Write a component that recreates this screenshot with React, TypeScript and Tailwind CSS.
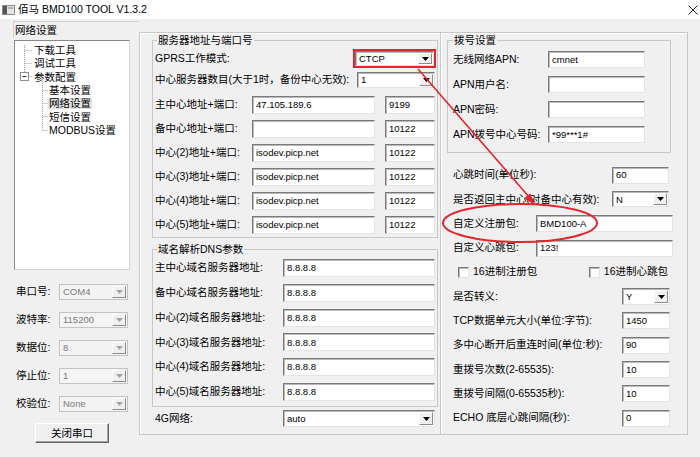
import React from "react";

const edge3d =
  "border border-t-[#7a7a7a] border-l-[#7a7a7a] border-r-[#e4e4e4] border-b-[#e4e4e4] shadow-[inset_1px_1px_0_#b9b9b9]";

function Edit({ value = "", className = "" }: { value?: string; className?: string }) {
  return (
    <div
      className={`flex items-center overflow-hidden whitespace-nowrap bg-white pl-[3px] text-[9.5px] leading-none ${edge3d} ${className}`}
    >
      {value}
    </div>
  );
}

function Arrow({ disabled = false }: { disabled?: boolean }) {
  return (
    <svg width="7" height="4" viewBox="0 0 7 4">
      <path d="M0 0h7L3.5 4z" fill={disabled ? "#a3a3a3" : "#000"} />
    </svg>
  );
}

function Combo({
  value,
  className = "",
  disabled = false,
}: {
  value: string;
  className?: string;
  disabled?: boolean;
}) {
  return (
    <div
      className={`flex overflow-hidden ${
        disabled
          ? "border border-[#c4c4c4] bg-[#f4f4f4] text-[#7a7a7a]"
          : `bg-white text-black ${edge3d}`
      } ${className}`}
    >
      <div className="flex flex-1 items-center pl-[3px] text-[9.5px] leading-none">{value}</div>
      <div className="m-[1px] flex w-[14px] items-center justify-center border border-t-white border-l-white border-r-[#8c8c8c] border-b-[#8c8c8c] bg-[#f0f0f0]">
        <Arrow disabled={disabled} />
      </div>
    </div>
  );
}

function Check() {
  return <div className={`h-[11px] w-[11px] bg-white ${edge3d}`} />;
}

const tree = [
  { text: "下载工具", child: false },
  { text: "调试工具", child: false },
  { text: "参数配置", child: false },
  { text: "基本设置", child: true },
  { text: "网络设置", child: true, sel: true },
  { text: "短信设置", child: true },
  { text: "MODBUS设置", child: true },
];

const serial = [
  ["串口号:", "COM4"],
  ["波特率:", "115200"],
  ["数据位:", "8"],
  ["停止位:", "1"],
  ["校验位:", "None"],
];

const centers = [
  ["主中心地址+端口:", "47.105.189.6", "9199"],
  ["备中心地址+端口:", "", "10122"],
  ["中心(2)地址+端口:", "isodev.picp.net", "10122"],
  ["中心(3)地址+端口:", "isodev.picp.net", "10122"],
  ["中心(4)地址+端口:", "isodev.picp.net", "10122"],
  ["中心(5)地址+端口:", "isodev.picp.net", "10122"],
];

const dns = [
  "主中心域名服务器地址:",
  "备中心域名服务器地址:",
  "中心(2)域名服务器地址:",
  "中心(3)域名服务器地址:",
  "中心(4)域名服务器地址:",
  "中心(5)域名服务器地址:",
];

const apn = [
  ["无线网络APN:", "cmnet"],
  ["APN用户名:", ""],
  ["APN密码:", ""],
  ["APN拨号中心号码:", "*99***1#"],
];

const numbers = [
  ["TCP数据单元大小(单位:字节):", "1450"],
  ["多中心断开后重连时间(单位:秒):", "90"],
  ["重拨号次数(2-65535):", "10"],
  ["重拨号间隔(0-65535秒):", "10"],
  ["ECHO 底层心跳间隔(秒):", "0"],
];

function TitleBar() {
  return (
    <div className="flex h-[19px] items-center bg-white">
      <svg className="ml-[2px]" width="13" height="10" viewBox="0 0 13 10">
        <rect x="0.5" y="0.5" width="12" height="9" fill="#e6e6e6" stroke="#8a8a8a" />
        <rect x="1" y="1" width="4" height="8" fill="#555" />
        <rect x="6" y="2" width="5" height="2" fill="#9fb7c9" />
      </svg>
      <span className="ml-[3px] text-[10.5px] leading-none">佰马 BMD100 TOOL V1.3.2</span>
      <svg className="ml-auto mr-[2px]" width="10" height="10" viewBox="0 0 10 10">
        <path d="M0.5 0.5L9.5 9.5M9.5 0.5L0.5 9.5" stroke="#222" strokeWidth="1" />
      </svg>
    </div>
  );
}

function LeftColumn() {
  return (
    <div className="w-[139px] shrink-0">
      <div className="ml-[13px] mt-[2px] flex h-[17px] items-center border-l border-t border-[#d0d0d0] pl-[1px] leading-none">
        网络设置
      </div>
      <div className="relative ml-[14px] mt-[2px] h-[230px] w-[116px] border border-t-[#8a8a8a] border-l-[#8a8a8a] border-r-[#d6d6d6] border-b-[#d6d6d6] bg-white pt-[2.5px]">
        <svg className="absolute left-0 top-0" width="114" height="100" viewBox="0 0 114 100">
          <g stroke="#a0a0a0" strokeWidth="1" strokeDasharray="1 1" fill="none">
            <path d="M9.5 4V31.5M9.5 9.5H17M9.5 22.5H17M13.5 35.5H17" />
            <path d="M27.5 40V89.5M27.5 49.5H33M27.5 62.5H33M27.5 75.5H33M27.5 89.5H33" />
          </g>
          <rect x="5.5" y="31.5" width="8" height="8" fill="#fff" stroke="#8f8f8f" />
          <path d="M7.5 35.5H11.5" stroke="#333" />
        </svg>
        {tree.map((t) => (
          <div
            key={t.text}
            className={`flex h-[13.33px] items-center leading-none ${t.child ? "pl-[34px]" : "pl-[19px]"}`}
          >
            <span className={t.sel ? "-ml-[1px] bg-[#e4e4e4] px-[1px]" : ""}>{t.text}</span>
          </div>
        ))}
      </div>
      <div className="mt-[8px]">
        {serial.map(([label, value]) => (
          <div key={label} className="flex h-[28px] items-center pl-[16px]">
            <span className="w-[43px]">{label}</span>
            <Combo value={value} disabled className="h-[16px] w-[69px]" />
          </div>
        ))}
      </div>
      <div className="ml-[35px] mt-[5px] flex h-[20px] w-[74px] items-center justify-center border border-t-white border-l-white border-r-[#646464] border-b-[#646464] bg-[#f0f0f0] shadow-[inset_-1px_-1px_0_#a0a0a0] leading-none">
        关闭串口
      </div>
    </div>
  );
}

function MiddleFrame() {
  return (
    <div className="mt-[13px] h-[403px] w-[301px] shrink-0 border border-r-0 border-[#c8c8c8] shadow-[inset_1px_1px_0_#fff]">
      <fieldset className="ml-[12px] mt-[1px] w-[286px] border border-[#c8c8c8] px-[2px] pb-[3px]">
        <legend className="ml-[2px] px-[1px] leading-[13px]">服务器地址与端口号</legend>
        <div className="mt-[2px] flex h-[19px] items-center">
          <span>GPRS工作模式:</span>
          <div className="-mr-[1px] ml-auto h-[19px] w-[83px] border-2 border-[#e3262c]">
            <Combo value="CTCP" className="h-full w-full" />
          </div>
        </div>
        <div className="mt-[3px] flex h-[17px] items-center">
          <span>中心服务器数目(大于1时，备份中心无效):</span>
          <Combo value="1" className="ml-auto h-[16px] w-[78px]" />
        </div>
        <div className="mt-[8px] flex flex-col gap-[6px]">
          {centers.map(([label, host, port]) => (
            <div key={label} className="flex h-[18px] items-center">
              <span className="w-[97px] whitespace-nowrap">{label}</span>
              <Edit value={host} className="h-[18px] w-[123px]" />
              <Edit value={port} className="ml-[10px] h-[18px] w-[50px]" />
            </div>
          ))}
        </div>
      </fieldset>
      <fieldset className="ml-[12px] mt-[5px] w-[286px] border border-[#c8c8c8] px-[2px] pb-[5px]">
        <legend className="ml-[2px] px-[1px] leading-[13px]">域名解析DNS参数</legend>
        <div className="mt-[3px] flex flex-col gap-[6.8px]">
          {dns.map((label) => (
            <div key={label} className="flex h-[18px] items-center">
              <span className="w-[128px] whitespace-nowrap">{label}</span>
              <Edit value="8.8.8.8" className="h-[18px] w-[152px]" />
            </div>
          ))}
        </div>
      </fieldset>
      <div className="ml-[15px] mt-[3px] flex h-[18px] items-center">
        <span className="w-[128px]">4G网络:</span>
        <Combo value="auto" className="h-[17px] w-[152px]" />
      </div>
    </div>
  );
}

function RightFrame() {
  return (
    <div className="mt-[13px] h-[403px] w-[248px] shrink-0 border border-[#c8c8c8] shadow-[inset_1px_1px_0_#fff]">
      <fieldset className="ml-[6px] mt-[1px] w-[224px] border border-[#c8c8c8] px-[5px] pb-[5px]">
        <legend className="px-[1px] leading-[13px]">拨号设置</legend>
        {apn.map(([label, value]) => (
          <div key={label} className="flex h-[25px] items-center">
            <span className="w-[95px] whitespace-nowrap">{label}</span>
            <Edit value={value} className="h-[17px] w-[97px]" />
          </div>
        ))}
      </fieldset>
      <div className="ml-[12px] mt-[10px] w-[220px]">
        <div className="flex h-[24.3px] items-center">
          <span>心跳时间(单位秒):</span>
          <Edit value="60" className="ml-auto mr-[4px] h-[17px] w-[57px]" />
        </div>
        <div className="flex h-[24.3px] items-center">
          <span>是否返回主中心(对备中心有效):</span>
          <Combo value="N" className="ml-auto mr-[4px] h-[16px] w-[57px]" />
        </div>
        <div className="flex h-[24.3px] items-center">
          <span className="w-[83px]">自定义注册包:</span>
          <Edit value="BMD100-A" className="h-[17px] w-[137px]" />
        </div>
        <div className="flex h-[24.3px] items-center">
          <span className="w-[83px]">自定义心跳包:</span>
          <Edit value="123!" className="h-[17px] w-[137px]" />
        </div>
        <div className="flex h-[24.3px] items-center pl-[5px]">
          <Check />
          <span className="ml-[4px]">16进制注册包</span>
          <div className="ml-auto mr-[5px] flex items-center">
            <Check />
            <span className="ml-[4px]">16进制心跳包</span>
          </div>
        </div>
        <div className="flex h-[24.3px] items-center">
          <span>是否转义:</span>
          <Combo value="Y" className="ml-auto mr-[3px] h-[17px] w-[48px]" />
        </div>
        {numbers.map(([label, value]) => (
          <div key={label} className="flex h-[24.3px] items-center">
            <span className="whitespace-nowrap">{label}</span>
            <Edit value={value} className="ml-auto mr-[3px] h-[17px] w-[48px]" />
          </div>
        ))}
      </div>
    </div>
  );
}

export default function App() {
  return (
    <div className="relative h-[457px] w-[700px] overflow-hidden bg-[#f0f0f0] font-['Liberation_Sans','Noto_Sans_CJK_SC',sans-serif] text-[10.5px] text-black">
      <TitleBar />
      <div className="flex">
        <LeftColumn />
        <MiddleFrame />
        <RightFrame />
      </div>
      <svg
        className="pointer-events-none absolute inset-0"
        width="700"
        height="457"
        viewBox="0 0 700 457"
      >
        <ellipse cx="520" cy="223" rx="77" ry="19" fill="none" stroke="#e3262c" strokeWidth="2" />
        <line x1="418" y1="69" x2="530" y2="198" stroke="#e3262c" strokeWidth="1.6" />
        <polygon points="535,205 530.2,193.3 524.2,198.5" fill="#e3262c" />
      </svg>
    </div>
  );
}
